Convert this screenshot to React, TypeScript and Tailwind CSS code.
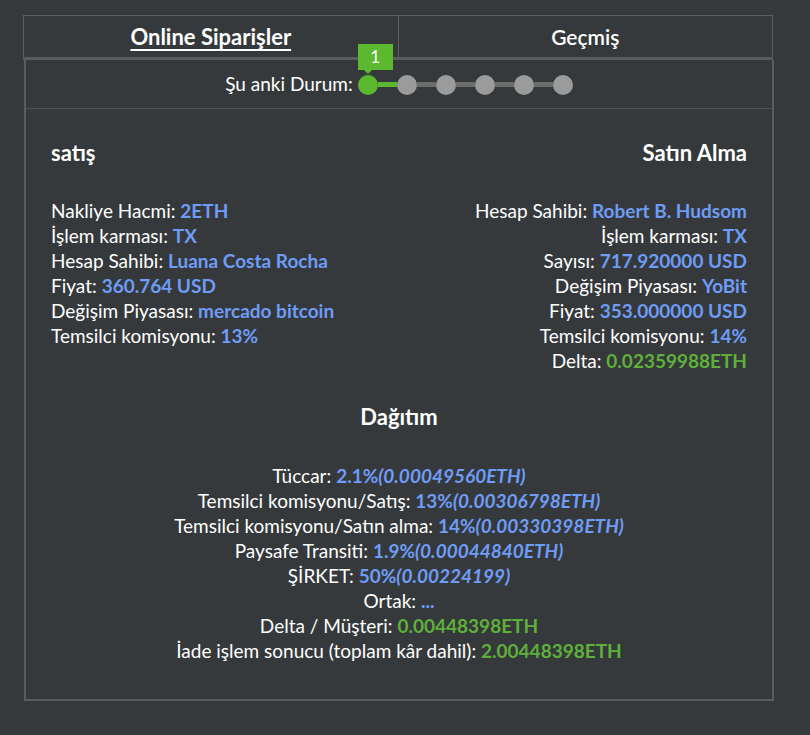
import React from "react";

const Blue = ({ children }: { children: React.ReactNode }) => (
  <span className="font-bold text-[#6e9cf6]">{children}</span>
);
const Green = ({ children }: { children: React.ReactNode }) => (
  <span className="font-bold text-[#5fb03a]">{children}</span>
);
const Eth = ({ children }: { children: React.ReactNode }) => (
  <span className="font-bold italic text-[#6e9cf6]">{children}</span>
);

const Stepper = () => {
  const rest = [2, 3, 4, 5, 6];
  return (
    <div className="flex items-center">
      <div className="relative w-[20px] h-[20px] rounded-full bg-[#5cb82f]">
        <div className="absolute left-0 top-[-31px] w-[35px] h-[26px] bg-[#5cb82f] text-white text-[17px] leading-[26px] text-center">
          1
        </div>
        <div className="absolute left-[6px] top-[-5px] w-0 h-0 border-l-[4px] border-r-[4px] border-t-[4px] border-l-transparent border-r-transparent border-t-[#5cb82f]" />
      </div>
      {rest.map((n) => (
        <React.Fragment key={n}>
          <div
            className={
              n === 2
                ? "w-[19px] h-[5px] bg-[#5cb82f]"
                : "w-[19px] h-[5px] bg-[#6b6c6c]"
            }
          />
          <div className="w-[20px] h-[20px] rounded-full bg-[#9b9b9b]" />
        </React.Fragment>
      ))}
    </div>
  );
};

export default function App() {
  return (
    <div
      className="w-[810px] h-[735px] bg-[#35393b] pt-[15px] pl-[23px] text-white text-[19px]"
      style={{ fontFamily: "Lato, 'Noto Sans', sans-serif" }}
    >
      <div className="w-[751px]">
        {/* tabs */}
        <div className="flex w-[750px] border-t border-l border-r border-[#5c5f61]">
          <div className="flex-1 h-[41px] flex items-center justify-center border-r border-[#5c5f61] text-[22px] font-bold underline underline-offset-[4px]">
            Online Siparişler
          </div>
          <div className="flex-1 h-[41px] flex items-center justify-center text-[21px] font-semibold">
            Geçmiş
          </div>
        </div>
        <div className="w-[750px] h-[3px] bg-[#5a5c5d]" />

        {/* content */}
        <div className="ml-[1px] w-[750px] border-2 border-t-0 border-[#5a5d5f]">
          <div className="h-[49px] flex items-center justify-center gap-[5px] border-b border-[#4d5153] pt-[1px]">
            <span>Şu anki Durum:</span>
            <Stepper />
          </div>

          <div className="px-[25px] pt-[31px] pb-[36px] leading-[25px]">
            <div className="flex justify-between">
              <div>
                <div className="text-[22px] font-bold mb-[33px]">satış</div>
                <div>
                  Nakliye Hacmi: <Blue>2ETH</Blue>
                </div>
                <div>
                  İşlem karması: <Blue>TX</Blue>
                </div>
                <div>
                  Hesap Sahibi: <Blue>Luana Costa Rocha</Blue>
                </div>
                <div>
                  Fiyat: <Blue>360.764 USD</Blue>
                </div>
                <div>
                  Değişim Piyasası: <Blue>mercado bitcoin</Blue>
                </div>
                <div>
                  Temsilci komisyonu: <Blue>13%</Blue>
                </div>
              </div>
              <div className="text-right">
                <div className="text-[22px] font-bold mb-[33px]">Satın Alma</div>
                <div>
                  Hesap Sahibi: <Blue>Robert B. Hudsom</Blue>
                </div>
                <div>
                  İşlem karması: <Blue>TX</Blue>
                </div>
                <div>
                  Sayısı: <Blue>717.920000 USD</Blue>
                </div>
                <div>
                  Değişim Piyasası: <Blue>YoBit</Blue>
                </div>
                <div>
                  Fiyat: <Blue>353.000000 USD</Blue>
                </div>
                <div>
                  Temsilci komisyonu: <Blue>14%</Blue>
                </div>
                <div>
                  Delta: <Green>0.02359988ETH</Green>
                </div>
              </div>
            </div>

            <div className="mt-[31px] text-center">
              <div className="text-[22px] font-bold mb-[34px]">Dağıtım</div>
              <div>
                Tüccar: <Blue>2.1%</Blue>
                <Eth>(0.00049560ETH)</Eth>
              </div>
              <div>
                Temsilci komisyonu/Satış: <Blue>13%</Blue>
                <Eth>(0.00306798ETH)</Eth>
              </div>
              <div>
                Temsilci komisyonu/Satın alma: <Blue>14%</Blue>
                <Eth>(0.00330398ETH)</Eth>
              </div>
              <div>
                Paysafe Transiti: <Blue>1.9%</Blue>
                <Eth>(0.00044840ETH)</Eth>
              </div>
              <div>
                ŞİRKET: <Blue>50%</Blue>
                <Eth>(0.00224199)</Eth>
              </div>
              <div>
                Ortak: <Blue>...</Blue>
              </div>
              <div>
                Delta / Müşteri: <Green>0.00448398ETH</Green>
              </div>
              <div>
                İade işlem sonucu (toplam kâr dahil): <Green>2.00448398ETH</Green>
              </div>
            </div>
          </div>
        </div>
      </div>
    </div>
  );
}
